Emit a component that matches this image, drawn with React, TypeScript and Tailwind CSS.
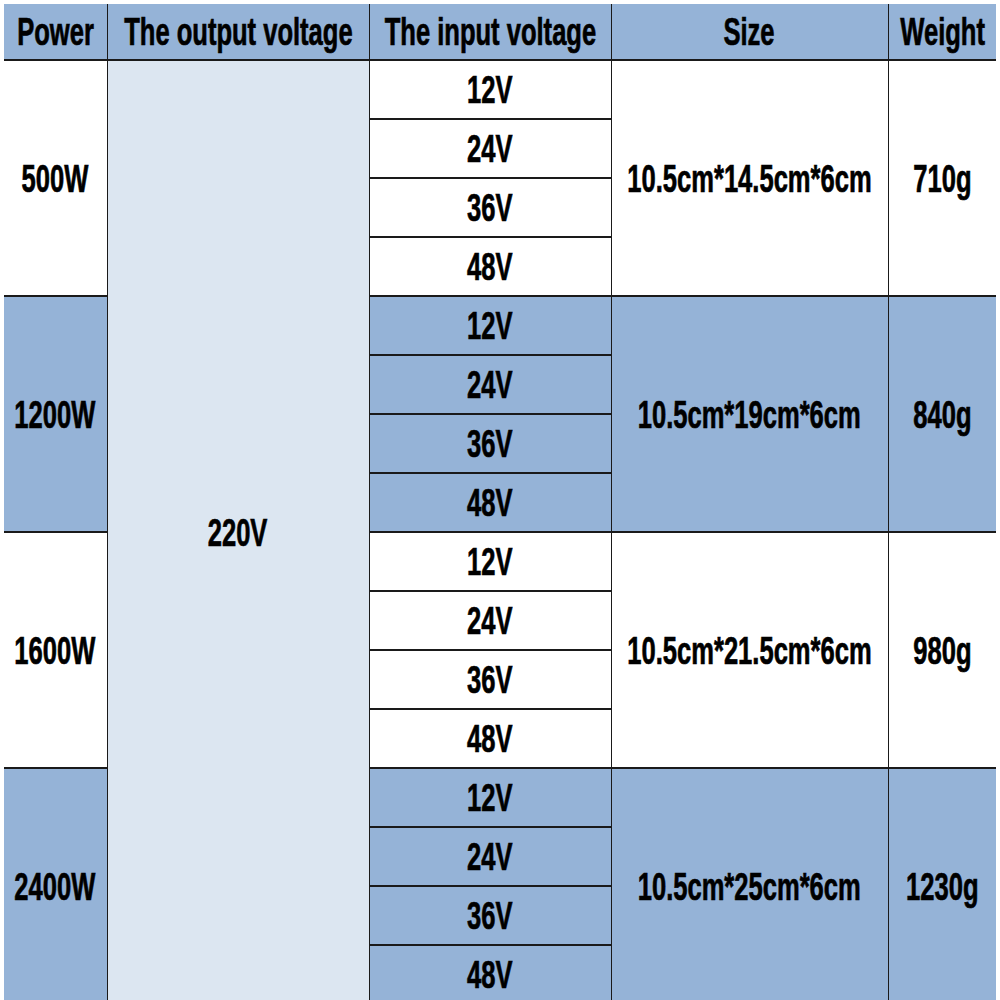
import React from 'react';

const groups = [
  { power: '500W', size: '10.5cm*14.5cm*6cm', weight: '710g', blue: false },
  { power: '1200W', size: '10.5cm*19cm*6cm', weight: '840g', blue: true },
  { power: '1600W', size: '10.5cm*21.5cm*6cm', weight: '980g', blue: false },
  { power: '2400W', size: '10.5cm*25cm*6cm', weight: '1230g', blue: true },
];

const volts = ['12V', '24V', '36V', '48V'];

const T: React.FC<{ children: React.ReactNode }> = ({ children }) => (
  <div className="flex justify-center">
    <span className="shrink-0 inline-block scale-x-[0.655] whitespace-nowrap [-webkit-text-stroke:0.7px_black]">{children}</span>
  </div>
);

const App: React.FC = () => {
  return (
    <div className="w-[1000px] h-[1000px] overflow-hidden bg-white pt-[4px] pl-[4px]">
      <table
        className="w-[992px] table-fixed border-collapse text-black font-bold text-[39px] leading-none text-center"
        style={{ fontFamily: '"Liberation Sans", Arial, sans-serif' }}
      >
        <colgroup>
          <col className="w-[103px]" />
          <col className="w-[262px]" />
          <col className="w-[242px]" />
          <col className="w-[277px]" />
          <col className="w-[108px]" />
        </colgroup>
        <thead>
          <tr className="h-[56px] bg-[#95b3d7] border-b-2 border-[#1a1a1a]">
            <th className="border-r border-[#1a1a1a] p-0 font-bold"><T>Power</T></th>
            <th className="border-r border-[#1a1a1a] p-0 font-bold"><T>The output voltage</T></th>
            <th className="border-r border-[#1a1a1a] p-0 font-bold"><T>The input voltage</T></th>
            <th className="border-r border-[#1a1a1a] p-0 font-bold"><T>Size</T></th>
            <th className="p-0 font-bold"><T>Weight</T></th>
          </tr>
        </thead>
        <tbody>
          {groups.map((g, gi) =>
            volts.map((v, vi) => {
              const bg = g.blue ? 'bg-[#95b3d7]' : 'bg-white';
              return (
                <tr key={g.power + v} className="h-[59px]">
                  {vi === 0 && (
                    <td rowSpan={4} className={`${bg} border-r border-b-2 border-[#1a1a1a] p-0`}>
                      <T>{g.power}</T>
                    </td>
                  )}
                  {gi === 0 && vi === 0 && (
                    <td rowSpan={16} className="bg-[#dce6f1] border-r border-[#1a1a1a] p-0">
                      <T>220V</T>
                    </td>
                  )}
                  <td className={`${bg} border-r border-b-2 border-[#1a1a1a] p-0`}>
                    <T>{v}</T>
                  </td>
                  {vi === 0 && (
                    <>
                      <td rowSpan={4} className={`${bg} border-r border-b-2 border-[#1a1a1a] p-0`}>
                        <T>{g.size}</T>
                      </td>
                      <td rowSpan={4} className={`${bg} border-b-2 border-[#1a1a1a] p-0`}>
                        <T>{g.weight}</T>
                      </td>
                    </>
                  )}
                </tr>
              );
            })
          )}
        </tbody>
      </table>
    </div>
  );
};

export default App;
